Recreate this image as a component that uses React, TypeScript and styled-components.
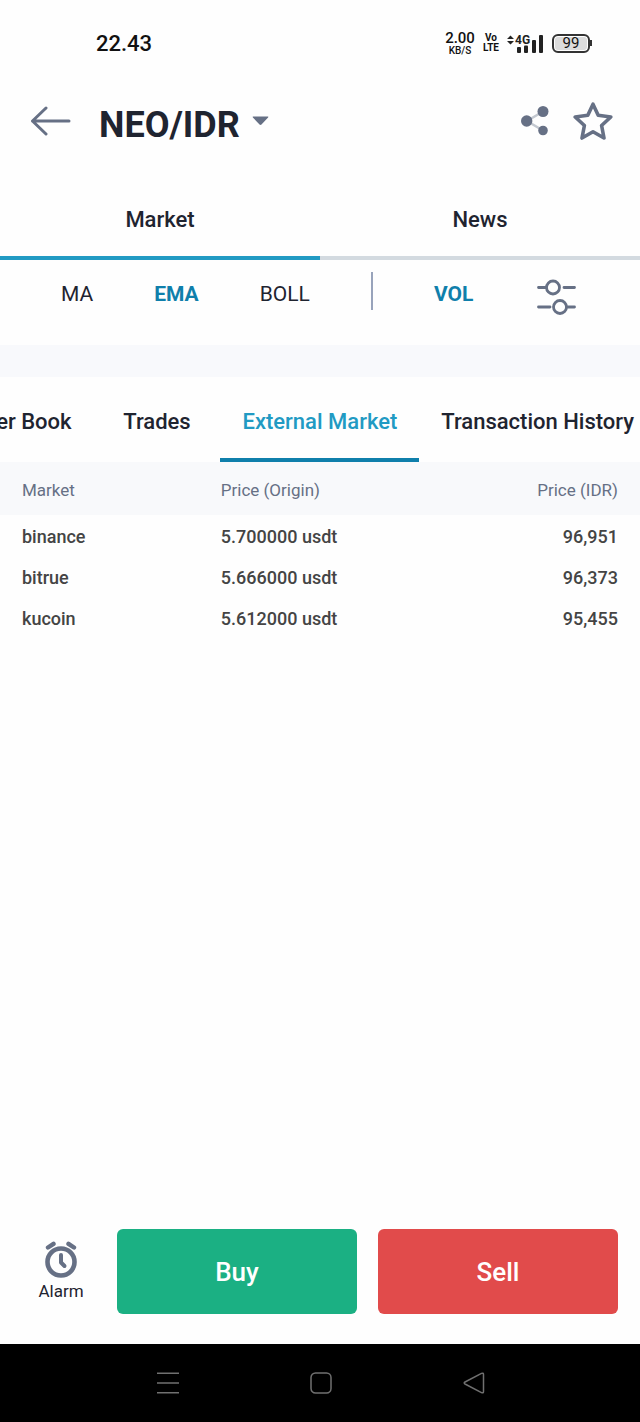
import React, { useLayoutEffect, useRef, useState } from "react";
import styled, { createGlobalStyle } from "styled-components";

const ink = "#1f2430";
const slate = "#667085";
const blue = "#0f7fab";
const sky = "#219ac3";

const GlobalStyle = createGlobalStyle`
  *, *::before, *::after { box-sizing: border-box; }
  body {
    margin: 0;
    background: #fefefe;
    color: ${ink};
    font-family: Roboto, "Liberation Sans", sans-serif;
  }
  button {
    margin: 0;
    padding: 0;
    border: 0;
    background: none;
    color: inherit;
    font: inherit;
    cursor: pointer;
  }
  svg { display: block; }
`;

const Screen = styled.div`
  display: flex;
  flex-direction: column;
  min-height: 100vh;
`;

const StatusBar = styled.div`
  display: flex;
  align-items: center;
  justify-content: space-between;
  height: 86px;
  padding: 0 48px 0 96px;
  color: #111;
`;

const Clock = styled.time`
  font-size: 22px;
  font-weight: 500;
`;

const StatusIcons = styled.div`
  display: flex;
  align-items: center;
  gap: 8px;
`;

const Stack = styled.div<{ $small?: boolean }>`
  display: flex;
  flex-direction: column;
  align-items: center;
  font-weight: ${(p) => (p.$small ? 700 : 500)};

  span {
    font-size: ${(p) => (p.$small ? 10 : 15)}px;
    line-height: ${(p) => (p.$small ? 10 : 15)}px;
  }

  small {
    font-size: 10px;
    line-height: 10px;
  }
`;

const Battery = styled.div`
  display: flex;
  align-items: center;

  span {
    width: 38px;
    height: 19px;
    border: 2px solid #333;
    border-radius: 6px;
    background: #dcdcdc;
    box-shadow: inset 0 0 0 1px #fff;
    font-size: 15px;
    line-height: 15px;
    text-align: center;
  }

  &::after {
    content: "";
    width: 2px;
    height: 6px;
    background: #333;
  }
`;

const Header = styled.header`
  display: flex;
  align-items: center;
  height: 70px;
  padding: 0 27px 0 30px;
`;

const PairButton = styled.button`
  display: flex;
  align-items: center;
  gap: 12px;
  margin: 8px auto 0 28px;

  h1 {
    margin: 0;
    font-size: 36px;
    font-weight: 700;
    line-height: 40px;
  }

  svg { margin-bottom: 8px; }
`;

const Actions = styled.div`
  display: flex;
  align-items: center;
  gap: 24px;
`;

const MainTabs = styled.nav`
  display: flex;
  padding-top: 22px;
`;

const MainTab = styled.button<{ $active?: boolean }>`
  flex: 1;
  height: 82px;
  padding-top: 4px;
  border-bottom: 4px solid ${(p) => (p.$active ? sky : "#d3dae0")};
  font-size: 22px;
  font-weight: 500;
`;

const Indicators = styled.div`
  display: flex;
  align-items: flex-start;
  gap: 61px;
  height: 85px;
  padding: 12px 64px 0 61px;
`;

const Indicator = styled.button<{ $active?: boolean }>`
  color: ${(p) => (p.$active ? blue : ink)};
  font-size: 21px;
  font-weight: ${(p) => (p.$active ? 700 : 400)};
  line-height: 44px;
`;

const Separator = styled.span`
  width: 2px;
  height: 38px;
  background: #98a3bb;
`;

const SettingsButton = styled.button`
  margin-left: auto;
  padding-top: 6px;
`;

const Band = styled.div`
  height: 32px;
  background: #f8f9fc;
`;

const SectionTabs = styled.nav`
  position: relative;
  display: flex;
  overflow-x: auto;
  scrollbar-width: none;
`;

const SectionTab = styled.button<{ $active?: boolean }>`
  flex: none;
  min-width: 127px;
  height: 85px;
  padding: 7px 22px 0;
  border-bottom: 4px solid ${(p) => (p.$active ? blue : "transparent")};
  color: ${(p) => (p.$active ? sky : ink)};
  font-size: 22px;
  font-weight: 500;
  white-space: nowrap;
`;

const Quotes = styled.table`
  width: 100%;
  border-collapse: separate;
  border-spacing: 0;
  table-layout: fixed;
  text-align: left;

  th, td { padding: 0 22px 0 0; }
  th:first-child, td:first-child { padding-left: 22px; }
  th:last-child, td:last-child { text-align: right; }

  th {
    height: 54px;
    padding-top: 2px;
    border-bottom: 1px solid #fefefe;
    background: #f8f9fb;
    color: ${slate};
    font-size: 17px;
    font-weight: 400;
  }

  th:first-child { width: 34.5%; }

  td {
    height: 41px;
    color: #444;
    font-size: 18px;
    font-weight: 500;
  }
`;

const Footer = styled.footer`
  display: flex;
  align-items: center;
  gap: 21px;
  margin-top: auto;
  padding: 0 22px 30px 26px;
`;

const AlarmButton = styled.button`
  display: flex;
  flex-direction: column;
  align-items: center;
  width: 70px;
  gap: 2px;
  font-size: 17px;
  line-height: 22px;
`;

const TradeButton = styled.button<{ $color: string }>`
  flex: 1;
  height: 85px;
  border-radius: 6px;
  background: ${(p) => p.$color};
  color: #fff;
  font-size: 26px;
  font-weight: 500;
`;

const SystemBar = styled.nav`
  display: flex;
  align-items: center;
  justify-content: space-around;
  height: 78px;
  padding: 0 90px 0 92px;
  background: #000;
`;

const SignalIcon = () => (
  <svg width="37" height="20" viewBox="0 0 37 20" fill="#222">
    <path d="M0 6 3.500 2.500 7 6ZM0 8h7L3.500 11.500Z" />
    <text x="8" y="11" fontSize="12" fontWeight="700">4G</text>
    <rect x="10" y="14" width="4" height="6" rx="1" />
    <rect x="17" y="12.500" width="4" height="7.500" rx="1" />
    <rect x="25" y="7" width="4" height="13" rx="1" />
    <rect x="32" y="2" width="4" height="18" rx="1" />
  </svg>
);

const BackIcon = () => (
  <svg width="41" height="30" viewBox="0 0 41 30" fill="none" stroke={slate} strokeWidth="3" strokeLinecap="round" strokeLinejoin="round">
    <path d="M39 15H2.500M16 2 2.500 15 16 28" />
  </svg>
);

const CaretIcon = () => (
  <svg width="17" height="10" viewBox="0 0 17 10" fill={slate}>
    <path d="M1.300 0.500h14.400q1.200 0 .4 1L9.500 8.600q-1 .9-2 0L.900 1.500q-.8-1 .4-1Z" />
  </svg>
);

const ShareIcon = () => (
  <svg width="28" height="30" viewBox="0 0 28 30" fill={slate}>
    <path d="M22 5.500 6 15 22 24.500" fill="none" stroke="#c3c8d0" strokeWidth="2.500" />
    <circle cx="22" cy="5.500" r="5.500" />
    <circle cx="5.700" cy="15" r="5.700" />
    <circle cx="22" cy="24.500" r="4.800" />
  </svg>
);

const StarIcon = () => (
  <svg width="40" height="38" viewBox="0 0 40 38" fill="none" stroke={slate} strokeWidth="3.600" strokeLinejoin="round">
    <path d="M20 2.200 25.200 13.300 37.800 15 28.600 23.500 31 36 20 29.800 9 36 11.400 23.500 2.200 15 14.800 13.300Z" />
  </svg>
);

const SlidersIcon = () => (
  <svg width="39" height="38" viewBox="0 0 39 38" fill="none" stroke={slate} strokeWidth="2.800" strokeLinecap="round">
    <path d="M1.500 9.500H9M27 9.500h10.500M1.500 29H13M30.500 29h7" />
    <circle cx="16" cy="9.500" r="6.500" />
    <circle cx="23" cy="29" r="6.500" />
  </svg>
);

const AlarmIcon = () => (
  <svg width="32" height="37" viewBox="0 0 32 37" fill="none" stroke={slate} strokeLinecap="round" strokeLinejoin="round">
    <circle cx="16" cy="21" r="13.500" strokeWidth="4.600" />
    <path d="M3 6.500 8.500 2.800M29 6.500 23.500 2.800" strokeWidth="4.400" />
    <path d="M16 14v7.500l3.500 3.500" strokeWidth="4" />
  </svg>
);

const quotes = [
  { market: "binance", origin: "5.700000 usdt", idr: "96,951" },
  { market: "bitrue", origin: "5.666000 usdt", idr: "96,373" },
  { market: "kucoin", origin: "5.612000 usdt", idr: "95,455" },
];

const sections = ["Order Book", "Trades", "External Market", "Transaction History"];

export default function App() {
  const [section, setSection] = useState("External Market");
  const strip = useRef<HTMLElement>(null);
  const current = useRef<HTMLButtonElement>(null);

  // Keep the selected section in the middle of the scrolling strip.
  useLayoutEffect(() => {
    const box = strip.current;
    const tab = current.current;
    if (box && tab) box.scrollLeft = tab.offsetLeft - (box.clientWidth - tab.offsetWidth) / 2;
  }, [section]);

  return (
    <Screen>
      <GlobalStyle />
      <StatusBar>
        <Clock>22.43</Clock>
        <StatusIcons>
          <Stack><span>2.00</span><small>KB/S</small></Stack>
          <Stack $small><span>Vo</span><small>LTE</small></Stack>
          <SignalIcon />
          <Battery><span>99</span></Battery>
        </StatusIcons>
      </StatusBar>

      <Header>
        <button aria-label="Back"><BackIcon /></button>
        <PairButton>
          <h1>NEO/IDR</h1>
          <CaretIcon />
        </PairButton>
        <Actions>
          <button aria-label="Share"><ShareIcon /></button>
          <button aria-label="Favourite"><StarIcon /></button>
        </Actions>
      </Header>

      <MainTabs>
        <MainTab $active>Market</MainTab>
        <MainTab>News</MainTab>
      </MainTabs>

      <Indicators>
        <Indicator>MA</Indicator>
        <Indicator $active>EMA</Indicator>
        <Indicator>BOLL</Indicator>
        <Separator />
        <Indicator $active>VOL</Indicator>
        <SettingsButton aria-label="Indicator settings"><SlidersIcon /></SettingsButton>
      </Indicators>

      <Band />

      <SectionTabs ref={strip}>
        {sections.map((name) => (
          <SectionTab
            key={name}
            ref={name === section ? current : undefined}
            $active={name === section}
            onClick={() => setSection(name)}
          >
            {name}
          </SectionTab>
        ))}
      </SectionTabs>

      <Quotes>
        <thead>
          <tr>
            <th scope="col">Market</th>
            <th scope="col">Price (Origin)</th>
            <th scope="col">Price (IDR)</th>
          </tr>
        </thead>
        <tbody>
          {quotes.map((q) => (
            <tr key={q.market}>
              <td>{q.market}</td>
              <td>{q.origin}</td>
              <td>{q.idr}</td>
            </tr>
          ))}
        </tbody>
      </Quotes>

      <Footer>
        <AlarmButton><AlarmIcon />Alarm</AlarmButton>
        <TradeButton $color="#1bb083">Buy</TradeButton>
        <TradeButton $color="#e14b4b">Sell</TradeButton>
      </Footer>

      <SystemBar>
        <button aria-label="Recent apps">
          <svg width="22" height="22" viewBox="0 0 22 22" stroke="#707070" strokeWidth="1.500">
            <path d="M0 1.200h22M0 11h22M0 20.800h22" />
          </svg>
        </button>
        <button aria-label="Home">
          <svg width="22" height="22" viewBox="0 0 22 22" fill="none" stroke="#707070" strokeWidth="1.500">
            <rect x="1" y="1" width="20" height="20" rx="4.500" />
          </svg>
        </button>
        <button aria-label="Back to previous screen">
          <svg width="22" height="22" viewBox="0 0 22 22" fill="none" stroke="#707070" strokeWidth="1.500" strokeLinejoin="round">
            <path d="M2 10 18.500 1.400Q20.500.6 20.500 2.500v17q0 1.900-2 1.100L2 12q-1.600-1 0-2Z" />
          </svg>
        </button>
      </SystemBar>
    </Screen>
  );
}
